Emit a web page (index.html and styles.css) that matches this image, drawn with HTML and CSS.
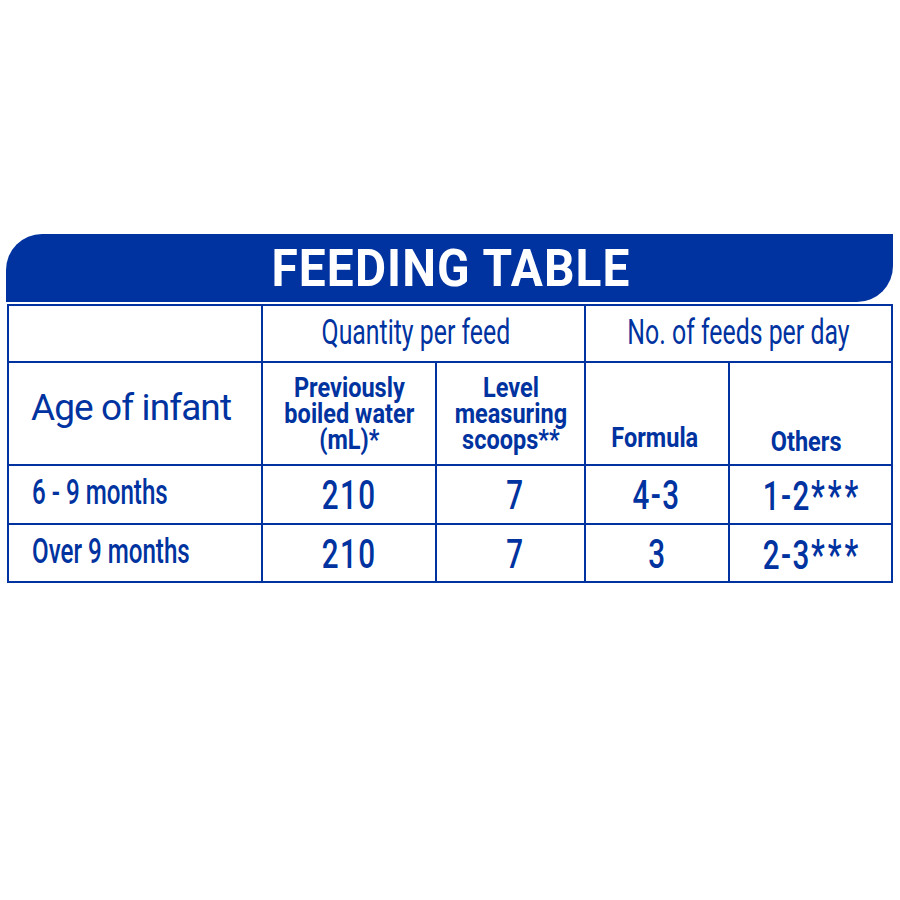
FILE: index.html
```html
<!DOCTYPE html>
<html>
<head>
<meta charset="utf-8">
<link rel="stylesheet" href="styles.css">
</head>
<body>
<div class="page">
  <div class="banner"><h1 class="title">FEEDING TABLE</h1></div>
  <div class="grid">
    <div class="cell"></div>
    <div class="cell span2 light q"><span class="sq">Quantity per feed</span></div>
    <div class="cell span2 light"><span class="sq">No. of feeds per day</span></div>

    <div class="cell age">Age of infant</div>
    <div class="cell bhd"><span class="sqb">Previously<br>boiled water<br>(mL)*</span></div>
    <div class="cell bhd"><span class="sqb">Level<br>measuring<br>scoops**</span></div>
    <div class="cell bhd bottom f"><span class="sqb">Formula</span></div>
    <div class="cell bhd bottom o"><span class="sqb">Others</span></div>

    <div class="cell rowlabel"><span class="sql">6 - 9 months</span></div>
    <div class="cell num"><span class="sqn">210</span></div>
    <div class="cell num seven"><span class="sqn">7</span></div>
    <div class="cell num"><span class="sqn">4-3</span></div>
    <div class="cell num"><span class="sqn">1-2<span class="ast">***</span></span></div>

    <div class="cell rowlabel"><span class="sql">Over 9 months</span></div>
    <div class="cell num"><span class="sqn">210</span></div>
    <div class="cell num seven"><span class="sqn">7</span></div>
    <div class="cell num"><span class="sqn">3</span></div>
    <div class="cell num"><span class="sqn">2-3<span class="ast">***</span></span></div>
  </div>
</div>
</body>
</html>
```

FILE: styles.css
```css
html, body {
  margin: 0;
  padding: 0;
  background: #ffffff;
}
body {
  font-family: Roboto, "Liberation Sans", sans-serif;
  color: #0033a0;
}
.page {
  padding-top: 234px;
  padding-left: 6px;
}
.banner {
  width: 887px;
  height: 68px;
  background: #0033a0;
  border-radius: 36px 0 36px 0;
  display: flex;
  align-items: center;
  justify-content: center;
}
.title {
  margin: 0;
  color: #ffffff;
  font-family: Roboto, sans-serif;
  font-weight: 700;
  font-size: 52px;
  line-height: 1;
  letter-spacing: 1.2px;
  transform: scaleX(0.92);
  padding-left: 3px;
  padding-top: 2px;
}
.grid {
  margin-top: 2px;
  margin-left: 1px;
  width: 882px;
  border: 2px solid #0033a0;
  background: #0033a0;
  display: grid;
  grid-template-columns: 252px 172px 147px 142px 161px;
  grid-template-rows: 55px 101px 57px 56px;
  gap: 2px;
}
.cell {
  background: #ffffff;
  display: flex;
  align-items: center;
  justify-content: center;
  text-align: center;
  overflow: hidden;
}
.span2 {
  grid-column: span 2;
}
.light {
  font-size: 35px;
  font-weight: 400;
  padding-bottom: 2px;
}
.light.q {
  padding-right: 16px;
}
.sq {
  display: inline-block;
  white-space: nowrap;
  transform: scaleX(0.71);
}
.age {
  justify-content: flex-start;
  padding-left: 22px;
  font-size: 37px;
  font-weight: 400;
  letter-spacing: -0.9px;
  padding-bottom: 12px;
}
.bhd {
  font-weight: 700;
  font-size: 28px;
  line-height: 26px;
}
.sqb {
  display: inline-block;
  white-space: nowrap;
  transform: scaleX(0.84);
}
.bottom {
  align-items: flex-end;
  padding-bottom: 10px;
}
.bottom.f {
  padding-bottom: 13px;
  padding-right: 4px;
}
.bottom.o {
  padding-bottom: 9px;
  padding-right: 8px;
}
.rowlabel {
  justify-content: flex-start;
  padding-left: 23px;
  font-size: 35px;
  font-weight: 500;
  padding-bottom: 4px;
}
.sql {
  display: inline-block;
  white-space: nowrap;
  transform: scaleX(0.69);
  transform-origin: left center;
}
.num {
  font-size: 40px;
  font-weight: 500;
  padding-top: 2px;
}
.num.seven {
  padding-left: 9px;
}
.sqn {
  display: inline-block;
  white-space: nowrap;
  transform: scaleX(0.74);
  letter-spacing: 2px;
}
.ast {
  letter-spacing: 4px;
  font-size: 42px;
  margin-right: -4px;
}
```
